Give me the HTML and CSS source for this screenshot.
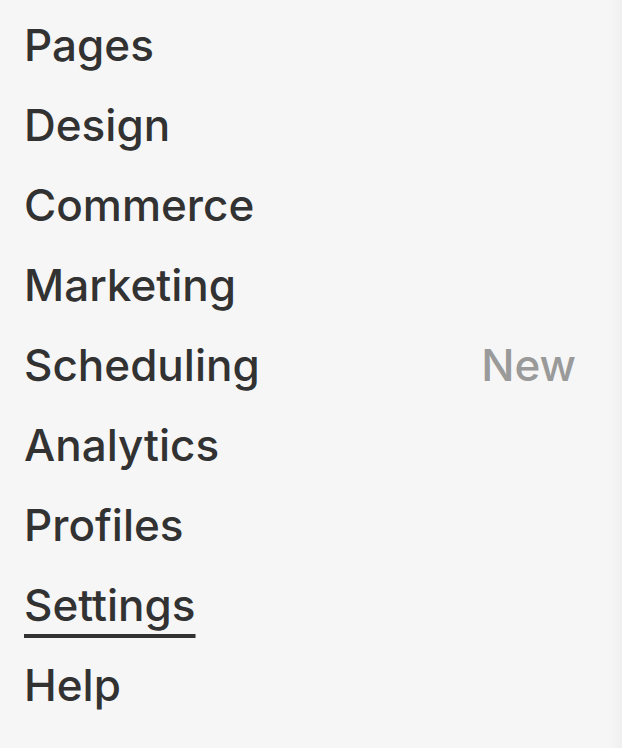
FILE: index.html
```html
<!DOCTYPE html>
<html lang="en">
<head>
    <meta charset="UTF-8">
    <meta name="viewport" content="width=device-width, initial-scale=1.0">
    <title>Menu</title>
    <link rel="stylesheet" href="styles.css">
</head>
<body>
    <nav class="menu">
        <a class="menu-item" href="#"><span class="label">Pages</span></a>
        <a class="menu-item" href="#"><span class="label">Design</span></a>
        <a class="menu-item" href="#"><span class="label">Commerce</span></a>
        <a class="menu-item" href="#"><span class="label">Marketing</span></a>
        <a class="menu-item" href="#"><span class="label">Scheduling</span><span class="badge">New</span></a>
        <a class="menu-item" href="#"><span class="label">Analytics</span></a>
        <a class="menu-item" href="#"><span class="label">Profiles</span></a>
        <a class="menu-item active" href="#"><span class="label">Settings</span></a>
        <a class="menu-item" href="#"><span class="label">Help</span></a>
    </nav>
</body>
</html>
```

FILE: styles.css
```css
html, body {
    height: 100%;
}
body {
    margin: 0;
    background-color: #f6f6f6;
    font-family: Inter, "Noto Sans", sans-serif;
    color: #323232;
    box-shadow: inset -14px 0 14px -10px rgba(0,0,0,0.04);
}
.menu {
    display: flex;
    flex-direction: column;
    padding: 5px 46px 0 24px;
}
.menu-item {
    display: flex;
    align-items: baseline;
    justify-content: space-between;
    height: 80px;
    line-height: 80px;
    font-size: 44px;
    font-weight: 500;
    color: #323232;
    text-decoration: none;
}
.active .label {
    text-decoration: underline;
    text-decoration-thickness: 4px;
    text-underline-offset: 13px;
    text-decoration-skip-ink: none;
}
.badge {
    color: #9a9a9a;
}
```
